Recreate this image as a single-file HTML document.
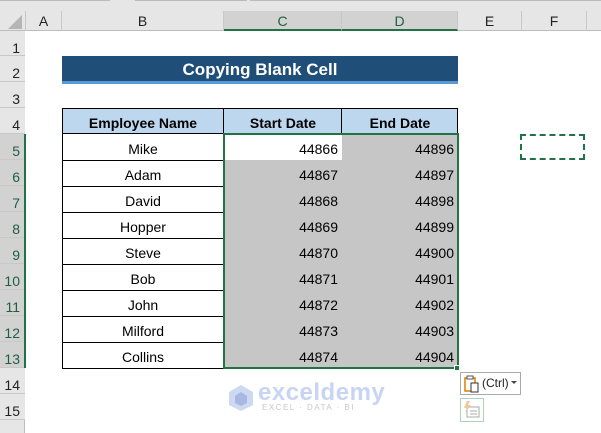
<!DOCTYPE html>
<html><head><style>
body{margin:0;width:601px;height:433px;background:#fff;position:relative;overflow:hidden;font-family:"Liberation Sans",Calibri,sans-serif;}
.a{position:absolute;box-sizing:border-box;}
.ch{top:11px;height:20px;font-size:14px;color:#222;text-align:center;line-height:20px;border-right:1px solid #c8c8c8;}
.rh{left:0;width:25px;height:26px;font-size:14px;color:#222;text-align:right;padding-right:5px;line-height:34px;border-bottom:1px solid #c8c8c8;background:#e6e6e6;}
.rh.s{background:#d2d2d2;color:#1f5f3f;}
.c{font-size:14px;color:#000;height:26px;line-height:30px;}
.n{text-align:center;}
.r{text-align:right;padding-right:4px;}
</style></head><body>
<div class="a" style="left:0;top:0;width:601px;height:31px;background:#e6e6e6;border-bottom:1px solid #bdbdbd"></div>
<div class="a" style="left:0;top:0;width:110px;height:1px;background:#bbb"></div>
<div class="a" style="left:135px;top:0;width:112px;height:1px;background:#bbb"></div>
<div class="a" style="left:250px;top:0;width:351px;height:1px;background:#bbb"></div>
<svg class="a" style="left:8px;top:15px" width="14" height="14"><polygon points="14,0 14,14 0,14" fill="#b5b5b5"/></svg>
<div class="a ch" style="left:25px;width:37px;border-left:1px solid #c8c8c8">A</div>
<div class="a ch" style="left:62px;width:162px">B</div>
<div class="a ch" style="left:224px;width:118px;background:#d2d2d2;color:#1f5f3f;border-bottom:2px solid #217346">C</div>
<div class="a ch" style="left:342px;width:116px;background:#d2d2d2;color:#1f5f3f;border-bottom:2px solid #217346">D</div>
<div class="a ch" style="left:458px;width:64px">E</div>
<div class="a ch" style="left:522px;width:65px">F</div>
<div class="a" style="left:0;top:31px;width:25px;height:402px;background:#e6e6e6;border-right:1px solid #bdbdbd"></div>
<div class="a rh" style="top:31px;height:25px">1</div>
<div class="a rh" style="top:56px">2</div>
<div class="a rh" style="top:82px">3</div>
<div class="a rh" style="top:108px">4</div>
<div class="a rh s" style="top:134px">5</div>
<div class="a rh s" style="top:160px">6</div>
<div class="a rh s" style="top:186px">7</div>
<div class="a rh s" style="top:212px">8</div>
<div class="a rh s" style="top:238px">9</div>
<div class="a rh s" style="top:264px">10</div>
<div class="a rh s" style="top:290px">11</div>
<div class="a rh s" style="top:316px">12</div>
<div class="a rh s" style="top:342px">13</div>
<div class="a rh" style="top:368px">14</div>
<div class="a rh" style="top:394px">15</div>
<div class="a" style="left:24px;top:134px;width:2px;height:234px;background:#217346"></div>

<div class="a" style="left:62px;top:56px;width:396px;height:25px;background:#1f4e79;color:#fff;font-weight:bold;font-size:17px;text-align:center;line-height:27px">Copying Blank Cell</div>
<div class="a" style="left:62px;top:81px;width:396px;height:3px;background:#5b9bd5"></div>

<div class="a" style="left:62px;top:108px;width:396px;height:26px;background:#bdd7ee;border:1px solid #000"></div>
<div class="a c n" style="left:62px;top:108px;width:162px;font-weight:bold">Employee Name</div>
<div class="a c n" style="left:224px;top:108px;width:118px;font-weight:bold">Start Date</div>
<div class="a c n" style="left:342px;top:108px;width:116px;font-weight:bold">End Date</div>
<div class="a" style="left:223px;top:108px;width:1px;height:26px;background:#000"></div>
<div class="a" style="left:341px;top:108px;width:1px;height:26px;background:#000"></div>

<div class="a" style="left:62px;top:134px;width:162px;height:235px;border:1px solid #000;border-top:none"></div>
<div class="a" style="left:225px;top:160px;width:232px;height:207px;background:#c6c6c6"></div>
<div class="a" style="left:342px;top:135px;width:115px;height:25px;background:#c6c6c6"></div>

<div id="rows"></div>
<script>
var names=["Mike","Adam","David","Hopper","Steve","Bob","John","Milford","Collins"];
var h="";
for(var i=0;i<9;i++){var t=134+i*26;
if(i>0)h+='<div class="a" style="left:62px;top:'+t+'px;width:162px;height:1px;background:#000"></div>';
h+='<div class="a c n" style="left:62px;top:'+t+'px;width:162px">'+names[i]+'</div>';
h+='<div class="a c r" style="left:224px;top:'+t+'px;width:118px">'+(44866+i)+'</div>';
h+='<div class="a c r" style="left:342px;top:'+t+'px;width:116px">'+(44896+i)+'</div>';}
document.getElementById("rows").innerHTML=h;
</script>
<div class="a" style="left:223px;top:133px;width:236px;height:236px;border:2px solid #217346"></div>
<div class="a" style="left:454px;top:365px;width:6px;height:6px;background:#217346;border:1px solid #fff"></div>
<div class="a" style="left:520px;top:134px;width:65px;height:26px;border:2px dashed #217346"></div>

<div class="a" style="left:460px;top:372px;width:61px;height:23px;border:1px solid #aaa;background:#fff"></div>
<svg class="a" style="left:464px;top:375px" width="16" height="18"><rect x="1" y="3" width="10" height="13" fill="none" stroke="#e07b00" stroke-width="1.5"/><rect x="3" y="1" width="6" height="3" fill="#fff" stroke="#555"/><rect x="7" y="8" width="7" height="9" fill="#fff" stroke="#333"/></svg>
<div class="a" style="left:482px;top:374px;font-size:12px;line-height:19px;color:#222">(Ctrl)</div>
<svg class="a" style="left:511px;top:381px" width="6" height="4"><polygon points="0,0 6,0 3,3" fill="#444"/></svg>
<div class="a" style="left:460px;top:398px;width:24px;height:24px;border:1px solid #a9d4b8;background:#fff"></div>
<svg class="a" style="left:463px;top:401px" width="18" height="18"><rect x="4" y="6" width="12" height="10" fill="none" stroke="#aaa"/><line x1="7" y1="10" x2="14" y2="10" stroke="#aaa"/><line x1="7" y1="13" x2="14" y2="13" stroke="#aaa"/><polygon points="4,0 1,7 4,7 2,12 8,4 5,4 7,0" fill="#f2c79a"/></svg>

<svg class="a" style="left:228px;top:384px" width="26" height="28"><polygon points="13,1 25,8 25,21 13,27 1,21 1,8" fill="#cdd8f2"/><polygon points="13,8 19,12 19,19 13,22 7,19 7,12" fill="#a8b8e0"/></svg>
<div class="a" style="left:258px;top:379px;font-size:24px;font-weight:bold;color:#c8d4f3;letter-spacing:0.5px">exceldemy</div>
<div class="a" style="left:262px;top:403px;font-size:8px;color:#c8c8c8;letter-spacing:1.5px">EXCEL · DATA · BI</div>
</body></html>
